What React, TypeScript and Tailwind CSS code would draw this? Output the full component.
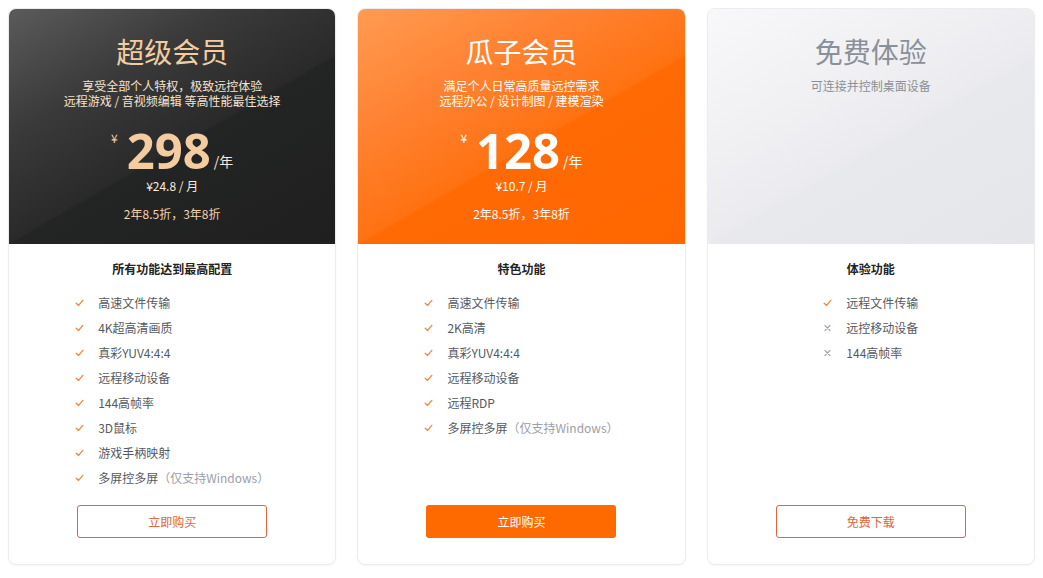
import React from "react";

const font = { fontFamily: '"Noto Sans CJK SC", "Noto Sans", sans-serif' };

function Check() {
  return (
    <svg width="9" height="8" viewBox="0 0 9 8" className="shrink-0">
      <path d="M1.2 4.2 L3.6 6.4 L7.8 1.4" fill="none" stroke="#f08a4b" strokeWidth="1.4" strokeLinecap="round" strokeLinejoin="round" />
    </svg>
  );
}

function Cross() {
  return (
    <svg width="9" height="8" viewBox="0 0 9 8" className="shrink-0">
      <path d="M2 1.5 L7 6.5 M7 1.5 L2 6.5" fill="none" stroke="#a5a8ae" strokeWidth="1.2" strokeLinecap="round" />
    </svg>
  );
}

type Item = { t: string; note?: string; no?: boolean };

function List({ items }: { items: Item[] }) {
  return (
    <ul className="mx-auto mt-[16px] flex w-fit flex-col gap-[7px]">
      {items.map((it, i) => (
        <li key={i} className="flex h-[18px] items-center gap-[14px] text-[12px] leading-[18px] text-[#555a61]">
          {it.no ? <Cross /> : <Check />}
          <span>
            {it.t}
            {it.note && <span className="text-[#9a9ea6]">{it.note}</span>}
          </span>
        </li>
      ))}
    </ul>
  );
}

function Price({ n, cur, unit }: { n: string; cur: string; unit: string }) {
  return (
    <div className="mt-[20px] flex items-start">
      <span className={`mt-[4px] mr-[9px] text-[12px] leading-[12px] ${cur}`}>¥</span>
      <span className="text-[49px] font-bold leading-[44px]" style={{ fontFamily: '"Open Sans", sans-serif' }}>{n}</span>
      <span className={`mt-[24px] ml-[3px] text-[14px] leading-[18px] ${unit}`}>/年</span>
    </div>
  );
}

export default function App() {
  return (
    <div className="flex gap-[21px] bg-white p-2" style={font}>
      {/* Card 1 */}
      <div className="flex h-[557px] w-[329px] flex-col overflow-hidden rounded-[8px] border border-[#ececef] bg-white shadow-[0_1px_2px_rgba(0,0,0,0.04)]">
        <div className="flex h-[235px] flex-col items-center bg-[linear-gradient(150deg,#5b5b5b_0%,#3a3a3a_30%,#2a2a2a_55%,#232424_56%,#1e1f1e_100%)] pt-[24px] text-[#f3cca2]">
          <div className="text-[28px] leading-[36px]">超级会员</div>
          <div className="mt-[9px] text-center text-[12px] leading-[15px] text-[#f6e3cf]">
            享受全部个人特权，极致远控体验
            <br />
            远程游戏 / 音视频编辑 等高性能最佳选择
          </div>
          <Price n="298" cur="text-[#f3cca2]" unit="text-[#f6e8da]" />
          <div className="mt-[6px] text-[12px] leading-[16px] text-[#f6ecdf]">¥24.8 / 月</div>
          <div className="mt-[12px] text-[12px] leading-[16px] text-[#f3d2ae]">2年8.5折，3年8折</div>
        </div>
        <div className="flex flex-1 flex-col">
          <div className="mt-[16px] text-center text-[12px] font-bold leading-[18px] text-[#222]">所有功能达到最高配置</div>
          <List
            items={[
              { t: "高速文件传输" },
              { t: "4K超高清画质" },
              { t: "真彩YUV4:4:4" },
              { t: "远程移动设备" },
              { t: "144高帧率" },
              { t: "3D鼠标" },
              { t: "游戏手柄映射" },
              { t: "多屏控多屏", note: "（仅支持Windows）" },
            ]}
          />
          <div className="mt-auto mb-[26px] flex justify-center">
            <button className="h-[33px] w-[190px] rounded-[3px] border border-[#e3633b] bg-white text-[12px] text-[#e3633b]">立即购买</button>
          </div>
        </div>
      </div>

      {/* Card 2 */}
      <div className="flex h-[557px] w-[329px] flex-col overflow-hidden rounded-[8px] border border-[#ececef] bg-white shadow-[0_1px_2px_rgba(0,0,0,0.04)]">
        <div className="flex h-[235px] flex-col items-center bg-[linear-gradient(150deg,#ff9b52_0%,#ff8232_30%,#ff7212_55%,#ff6a04_56%,#ff6600_100%)] pt-[24px] text-white">
          <div className="text-[28px] leading-[36px]">瓜子会员</div>
          <div className="mt-[9px] text-center text-[12px] leading-[15px]">
            满足个人日常高质量远控需求
            <br />
            远程办公 / 设计制图 / 建模渲染
          </div>
          <Price n="128" cur="text-white" unit="text-white" />
          <div className="mt-[6px] text-[12px] leading-[16px]">¥10.7 / 月</div>
          <div className="mt-[12px] text-[12px] leading-[16px]">2年8.5折，3年8折</div>
        </div>
        <div className="flex flex-1 flex-col">
          <div className="mt-[16px] text-center text-[12px] font-bold leading-[18px] text-[#222]">特色功能</div>
          <List
            items={[
              { t: "高速文件传输" },
              { t: "2K高清" },
              { t: "真彩YUV4:4:4" },
              { t: "远程移动设备" },
              { t: "远程RDP" },
              { t: "多屏控多屏", note: "（仅支持Windows）" },
            ]}
          />
          <div className="mt-auto mb-[26px] flex justify-center">
            <button className="h-[33px] w-[190px] rounded-[3px] bg-[#ff6a00] text-[12px] text-white">立即购买</button>
          </div>
        </div>
      </div>

      {/* Card 3 */}
      <div className="flex h-[557px] w-[329px] flex-col overflow-hidden rounded-[8px] border border-[#ececef] bg-white shadow-[0_1px_2px_rgba(0,0,0,0.04)]">
        <div className="flex h-[235px] flex-col items-center bg-[linear-gradient(150deg,#f8f8fa_0%,#f0f0f3_35%,#ebebef_55%,#e8e9ed_56%,#e5e6ea_100%)] pt-[24px]">
          <div className="text-[28px] leading-[36px] text-[#8a9099]">免费体验</div>
          <div className="mt-[9px] text-center text-[12px] leading-[15px] text-[#8a9099]">可连接并控制桌面设备</div>
        </div>
        <div className="flex flex-1 flex-col">
          <div className="mt-[16px] text-center text-[12px] font-bold leading-[18px] text-[#222]">体验功能</div>
          <List
            items={[
              { t: "远程文件传输" },
              { t: "远控移动设备", no: true },
              { t: "144高帧率", no: true },
            ]}
          />
          <div className="mt-auto mb-[26px] flex justify-center">
            <button className="h-[33px] w-[190px] rounded-[3px] border border-[#e3633b] bg-white text-[12px] text-[#e3633b]">免费下载</button>
          </div>
        </div>
      </div>
    </div>
  );
}
